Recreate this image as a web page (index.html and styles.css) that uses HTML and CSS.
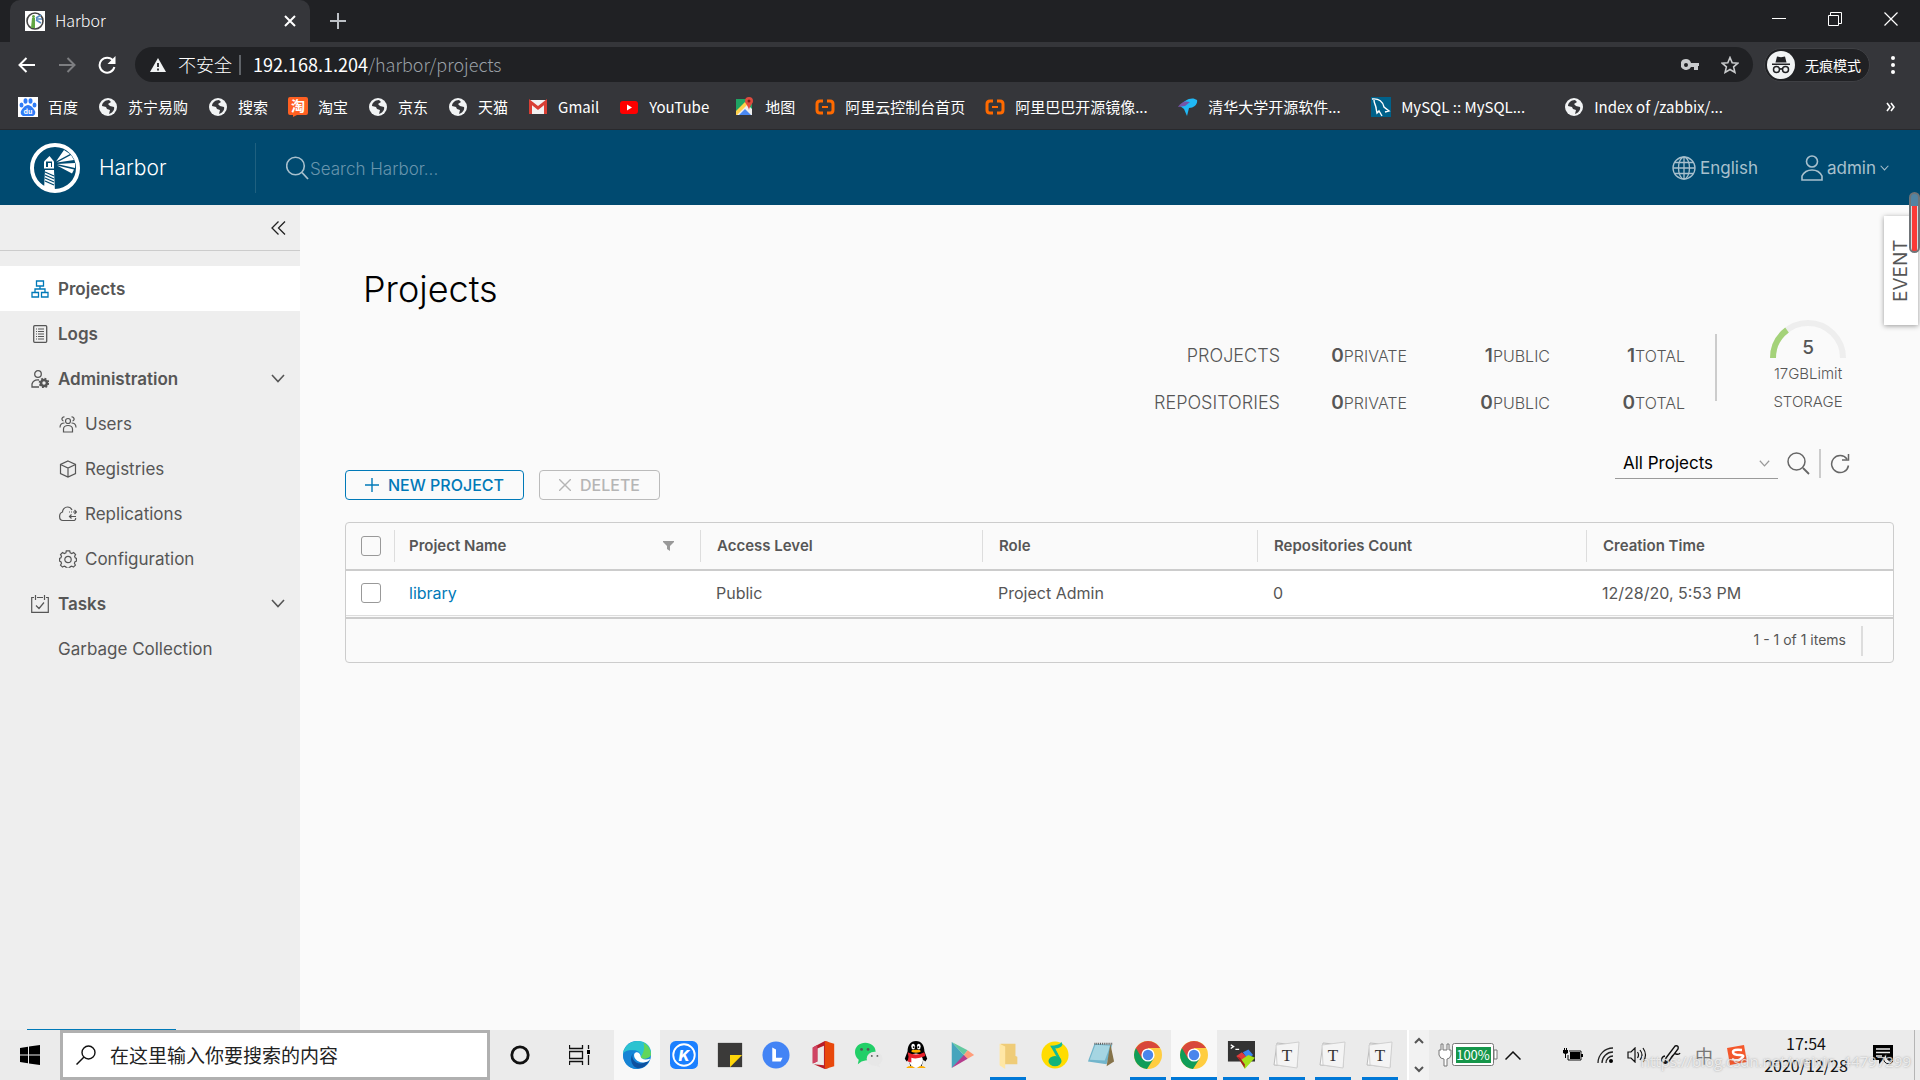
FILE: index.html
```html
<!DOCTYPE html>
<html lang="zh-CN">
<head>
<meta charset="utf-8">
<title>Harbor</title>
<link rel="stylesheet" href="styles.css">
</head>
<body>
<svg class="defs" aria-hidden="true">
  <symbol id="globe" viewBox="0 0 20 20"><circle cx="10" cy="10" r="9" fill="#f1f3f4"/><path d="M11 3 C7 3 4 6 4 9 L8 10 L9 12 L12 13 L11 17 C14 16 17 13 16 10 L12 9 L10 7 L13 5Z" fill="#35363a"/></symbol>
  <symbol id="ali" viewBox="0 0 20 20"><path d="M8 4 H5 Q2 4 2 7 V13 Q2 16 5 16 H8 M12 4 H15 Q18 4 18 7 V13 Q18 16 15 16 H12" fill="none" stroke="#ff6a00" stroke-width="3"/><path d="M7 9h6v2H7z" fill="#ff6a00"/></symbol>
  <symbol id="chrome" viewBox="0 0 28 28"><circle cx="14" cy="14" r="14" fill="#ffcd40"/><path d="M14 14 L1.900 7 A14 14 0 0 0 13 28 L20 17Z" fill="#109d58"/><path d="M14 14 L8 17.500 L1.900 7 A14 14 0 0 1 26.100 7 L14 7Z" fill="#d8483b"/><circle cx="14" cy="14" r="6.600" fill="#fff"/><circle cx="14" cy="14" r="5.200" fill="#4a86ec"/></symbol>
  <symbol id="typora" viewBox="0 0 28 28"><path d="M4 2 L25 4 L24 26 L1 24Z" fill="#fafafa" stroke="#bbb"/><path d="M3 4 L26 1 L24 27 L4 24Z" fill="#f4f4f4" stroke="#d0d0d0"/><text x="14" y="20" text-anchor="middle" font-family="Liberation Serif, serif" font-size="17" fill="#333">T</text></symbol>
  <symbol id="chev" viewBox="0 0 14 9"><path d="M1 1 L7 7.500 L13 1" fill="none" stroke="currentColor" stroke-width="1.600"/></symbol>
</svg>

<header class="browser">
  <div class="tabstrip">
    <div class="tab">
      <svg class="i20" viewBox="0 0 20 20"><path d="M0 0h20v20H0z" fill="#fff"/><circle cx="10" cy="10" r="8" fill="none" stroke="#444" stroke-width="1.600"/><path d="M7 7h3v10H6z" fill="#62a744"/><circle cx="8.500" cy="5.500" r="1.500" fill="#62a744"/><path d="M11 7l5-3M11 8h6M11 9l5 3" stroke="#5a8fc4" stroke-width="1.500"/></svg>
      <span>Harbor</span>
      <button class="bare" aria-label="Close tab"><svg width="12" height="12" viewBox="0 0 12 12"><path d="M1 1l10 10M11 1L1 11" stroke="#fff" stroke-width="2"/></svg></button>
    </div>
    <button class="bare newtab" aria-label="New tab"><svg width="16" height="16" viewBox="0 0 16 16"><path d="M8 0v16M0 8h16" stroke="#bdc1c6" stroke-width="2"/></svg></button>
    <div class="winctl">
      <button class="bare" aria-label="Minimize"><svg width="14" height="14" viewBox="0 0 14 14"><path d="M0 6.500h14" stroke="#fff"/></svg></button>
      <button class="bare" aria-label="Restore"><svg width="14" height="14" viewBox="0 0 14 14"><path d="M.5 3.500h10v10H.5zM2.500 3V.5h11v11H11" fill="none" stroke="#fff"/></svg></button>
      <button class="bare" aria-label="Close"><svg width="14" height="14" viewBox="0 0 14 14"><path d="M.5.500l13 13M13.500.500l-13 13" stroke="#fff" stroke-width="1.200"/></svg></button>
    </div>
  </div>
  <div class="toolbar">
    <div class="nav">
      <button class="bare" aria-label="Back"><svg width="18" height="16" viewBox="0 0 18 16"><path d="M17 8H2M8.500 1L1.500 8l7 7" fill="none" stroke="#fff" stroke-width="2"/></svg></button>
      <button class="bare" aria-label="Forward"><svg width="18" height="16" viewBox="0 0 18 16"><path d="M1 8h15M9.500 1l7 7-7 7" fill="none" stroke="#7d7e81" stroke-width="2"/></svg></button>
      <button class="bare" aria-label="Reload"><svg width="18" height="18" viewBox="0 0 18 18"><path d="M15 4.500A7.500 7.500 0 1 0 16.400 11" fill="none" stroke="#fff" stroke-width="2"/><path d="M17.500 0v8h-8z" fill="#fff"/></svg></button>
    </div>
    <div class="omnibox">
      <svg width="16" height="14" viewBox="0 0 16 14"><path d="M8 0l8 14H0z" fill="#f1f3f4"/><path d="M8 5v4M8 10.500v2" stroke="#202124" stroke-width="1.800"/></svg>
      <span class="insecure">不安全</span><i class="bar"></i>
      <span class="url"><b>192.168.1.204</b>/harbor/projects</span>
      <svg width="18" height="12" viewBox="0 0 18 12"><path d="M5 0a5.500 5.500 0 1 0 5 8h3v3h4V7h1V4h-8A5.500 5.500 0 0 0 5 0zm0 4a2 2 0 1 1 0 4 2 2 0 0 1 0-4z" fill="#c8cacc"/></svg>
      <svg width="18" height="18" viewBox="0 0 18 18"><path d="M9 1.500l2.200 5.200 5.600.500-4.200 3.700 1.300 5.500L9 13.500l-4.900 2.900 1.300-5.500L1.200 7.200l5.600-.500z" fill="none" stroke="#c8cacc" stroke-width="1.600"/></svg>
    </div>
    <div class="incog">
      <svg width="28" height="28" viewBox="0 0 28 28"><circle cx="14" cy="14" r="14" fill="#f1f3f4"/><path d="M10 5.500l4 .800 4-.800 1.500 6h-11zM5 12.500h18v1.500H5z" fill="#202124"/><g fill="none" stroke="#202124" stroke-width="1.500"><circle cx="9.500" cy="18.500" r="3"/><circle cx="18.500" cy="18.500" r="3"/><path d="M12.500 18.500q1.500-1.500 3 0"/></g></svg>
      <span>无痕模式</span>
    </div>
    <button class="bare" aria-label="Menu"><svg width="4" height="18" viewBox="0 0 4 18"><g fill="#fff"><circle cx="2" cy="2" r="2"/><circle cx="2" cy="9" r="2"/><circle cx="2" cy="16" r="2"/></g></svg></button>
  </div>
  <nav class="bookmarks">
    <a href="#"><svg class="i20" viewBox="0 0 20 20"><path d="M0 0h20v20H0z" fill="#fff"/><g fill="#2f7cf6"><ellipse cx="3.500" cy="8" rx="2" ry="2.600"/><ellipse cx="7.500" cy="4" rx="2" ry="2.800"/><ellipse cx="12.500" cy="4" rx="2" ry="2.800"/><ellipse cx="16.500" cy="8" rx="2" ry="2.600"/><path d="M10 8c3 0 6 4 7 6 1 3-1 5-3 5H6c-2 0-4-2-3-5 1-2 4-6 7-6z"/></g><text x="10" y="17" font-size="7" font-weight="700" text-anchor="middle" fill="#fff">du</text></svg><span>百度</span></a>
    <a href="#"><svg class="i20"><use href="#globe"/></svg><span>苏宁易购</span></a>
    <a href="#"><svg class="i20"><use href="#globe"/></svg><span>搜索</span></a>
    <a href="#"><svg class="i20" viewBox="0 0 20 20"><path d="M2 0h16q2 0 2 2v14q0 2-2 2H9l-4 2v-2H2q-2 0-2-2V2q0-2 2-2z" fill="#ff6022"/><text x="10" y="14" font-size="14" font-weight="700" text-anchor="middle" fill="#fff">淘</text></svg><span>淘宝</span></a>
    <a href="#"><svg class="i20"><use href="#globe"/></svg><span>京东</span></a>
    <a href="#"><svg class="i20"><use href="#globe"/></svg><span>天猫</span></a>
    <a href="#"><svg class="i20" viewBox="0 0 20 20"><path d="M1 3h18v14H1z" fill="#f2f2f2"/><path d="M2.500 17V5l7.500 6 7.500-6v12" fill="none" stroke="#d93f35" stroke-width="3"/></svg><span>Gmail</span></a>
    <a href="#"><svg class="i20" viewBox="0 0 20 20"><rect x="1" y="4" width="18" height="13" rx="3" fill="#f00"/><path d="M8 7.500l5 3-5 3z" fill="#fff"/></svg><span class="mid">YouTube</span></a>
    <a href="#"><svg class="i20" viewBox="0 0 20 20"><path d="M1 2h16v16H1z" fill="#1fa463"/><path d="M1 18L12 7l5 5v6z" fill="#eee"/><path d="M1 14l9-9 3 2L2 18H1z" fill="#ffd04b"/><path d="M4 18l6-6 6 6z" fill="#4a89f3"/><path d="M14 0a4 4 0 0 1 4 4c0 3-3 4-4 9-1-5-4-6-4-9a4 4 0 0 1 4-4z" fill="#dd4b3e"/><circle cx="14" cy="4" r="1.500" fill="#7c1f18"/></svg><span>地图</span></a>
    <a href="#"><svg class="i20"><use href="#ali"/></svg><span>阿里云控制台首页</span></a>
    <a href="#"><svg class="i20"><use href="#ali"/></svg><span class="cut">阿里巴巴开源镜像...</span></a>
    <a href="#"><svg class="i20" viewBox="0 0 20 20"><path d="M2 9C6 3 14-1 19 3c1 4-3 8-8 8l-2 8-3-7z" fill="#20b8f5"/><path d="M0 10C4 4 8 4 12 5L7 9z" fill="#7554a8"/></svg><span class="cut">清华大学开源软件...</span></a>
    <a href="#"><svg class="i20" viewBox="0 0 20 20"><path d="M0 0h20v20H0z" fill="#00618a"/><path d="M1 2c7-1 11 3 12 8l5 4-4 1M3 3c0 4 2 5 2 8l1 5 2-2 3 5" fill="none" stroke="#fff" stroke-width="1.400"/></svg><span class="cut">MySQL :: MySQL...</span></a>
    <a href="#"><svg class="i20"><use href="#globe"/></svg><span class="cut">Index of /zabbix/...</span></a>
    <button class="bare more" aria-label="More bookmarks"><svg width="9" height="10" viewBox="0 0 9 10"><path d="M1 1l3 4-3 4M5 1l3 4-3 4" fill="none" stroke="#fff" stroke-width="1.600"/></svg></button>
  </nav>
</header>

<header class="apphead">
  <a class="brand" href="#">
    <svg width="50" height="50" viewBox="0 0 50 50"><circle cx="25" cy="25" r="23" fill="none" stroke="#fff" stroke-width="4"/><path d="M14 18.500L19.500 13l4.500 5.500v7H14z" fill="#fff"/><path d="M16 18.500h6v5.500h-6z" fill="#004a70"/><path d="M18 20h3v4h-3z" fill="#fff"/><path d="M15 27h9l1 22-11-2z" fill="#fff"/><path d="M15 29l9 4M15 32l9 4M15 35l9 4M15 38l9 4" stroke="#004a70" stroke-width="1.300"/><path d="M26 18.500L34 7l6 4zM27 19.500L41 12l3 5zM27 21l18-1v5zM27 22.500l17 4-2 4z" fill="#fff"/></svg>
    <span>Harbor</span>
  </a>
  <label class="search">
    <svg width="23" height="24" viewBox="0 0 23 24"><circle cx="9.500" cy="10" r="8.800" fill="none" stroke="#a8c0cd" stroke-width="1.600"/><path d="M16 16.500l6 6.500" stroke="#a8c0cd" stroke-width="1.800"/></svg>
    <input type="text" aria-label="Search" placeholder="Search Harbor...">
  </label>
  <button class="bare headbtn lang">
    <svg width="24" height="24" viewBox="0 0 24 24"><g fill="none" stroke="#a8c0cd" stroke-width="1.300"><circle cx="12" cy="12" r="11"/><ellipse cx="12" cy="12" rx="5.500" ry="11"/><path d="M12 1v22M1 12h22M3 6.500h18M3 17.500h18"/></g></svg>
    <span>English</span>
  </button>
  <button class="bare headbtn">
    <svg width="22" height="26" viewBox="0 0 22 26"><g fill="none" stroke="#a8c0cd" stroke-width="1.600"><circle cx="11" cy="6.500" r="5.500"/><path d="M1 25v-4c2-4 6-6 10-6s8 2 10 6v4z"/></g></svg>
    <span>admin</span>
    <svg width="9" height="6"><use href="#chev"/></svg>
  </button>
</header>

<div class="body">
  <nav class="side">
    <div class="collapse"><button class="bare" aria-label="Collapse"><svg width="15" height="14" viewBox="0 0 15 14"><path d="M7.500.500L1 7l6.500 6.500M14 .500L7.500 7l6.500 6.500" fill="none" stroke="#222" stroke-width="1.300"/></svg></button></div>
    <a href="#" class="item on"><svg class="i18" viewBox="0 0 18 18"><g fill="none" stroke="#0079b8" stroke-width="1.300"><path d="M5.500 1h7v5h-7zM1 12.500h6.500V17H1zM10.500 12.500H17V17h-6.500zM9 6v3M4 12V9h10v3"/></g></svg>Projects</a>
    <a href="#" class="item"><svg class="i18" viewBox="0 0 18 18"><rect x="2.700" y=".7" width="13" height="16.600" rx="1" fill="none" stroke="#565656" stroke-width="1.300"/><path d="M5 4h1M7 4h6M5 6.500h1M7 6.500h6M5 9h1M7 9h6M5 11.500h1M7 11.500h6M5 14h1M7 14h6" stroke="#565656" stroke-width="1.200"/></svg>Logs</a>
    <a href="#" class="item"><svg class="i18" viewBox="0 0 18 18"><g fill="none" stroke="#565656" stroke-width="1.300"><circle cx="7" cy="4" r="3.300"/><path d="M8 17H1v-3c1-3 4-4.500 7-4"/></g><circle cx="13" cy="13" r="3" fill="none" stroke="#565656" stroke-width="2.600"/><circle cx="13" cy="13" r="4.500" fill="none" stroke="#565656" stroke-width="1.600" stroke-dasharray="1.800 1.734"/></svg>Administration<svg class="arrow"><use href="#chev"/></svg></a>
    <a href="#" class="item sub"><svg class="i18" viewBox="0 0 18 18"><g fill="none" stroke="#565656" stroke-width="1.200"><circle cx="9" cy="6" r="2.500"/><path d="M4.500 17v-3c0-2 2-3.500 4.500-3.500s4.500 1.500 4.500 3.500v3zM5.500 2a2 2 0 1 0-1 4M12.500 2a2 2 0 1 1 1 4M1 12.500C1 9 3 8 5.500 8M17 12.500c0-3.500-2-4.500-4.500-4.500"/></g></svg>Users</a>
    <a href="#" class="item sub"><svg class="i18" viewBox="0 0 18 18"><path d="M9 1l7.500 3.500v9L9 17l-7.500-3.500v-9zM1.500 4.500L9 8l7.500-3.500M9 8v9" fill="none" stroke="#565656" stroke-width="1.200"/></svg>Registries</a>
    <a href="#" class="item sub"><svg class="i18" viewBox="0 0 18 18"><path d="M13 5C12 3 10.500 2 8.500 2 5.500 2 3.500 4.500 3.500 7 1.700 7.500.600 9 .600 11.500S2 15.500 4 15.500h10c2 0 3-1 2.500-2.500M10 11.500h7M12.500 9.500l-2 2 2 2M10 7h1M12 7h1M14 7h3M15.500 5l2 2-2 2" fill="none" stroke="#565656" stroke-width="1.200"/></svg>Replications</a>
    <a href="#" class="item sub"><svg class="i18" viewBox="0 0 18 18"><g fill="none" stroke="#565656" stroke-width="1.200"><path d="M7.300.8h3.400l.5 2 1.600.7 1.800-1 2 2-1 1.800.6 1.500 1.200.6v2.800l-1.400.6-.6 1.500 1 1.800-2 2-1.800-1-1.500.6-.5 1.500H7.400l-.6-1.500-1.500-.6-1.800 1-2-2 1-1.800-.6-1.500-1.300-.6V8.400l1.300-.6.600-1.500-1-1.800 2-2 1.800 1 1.600-.7z"/><circle cx="9" cy="9.500" r="3.200"/></g></svg>Configuration</a>
    <a href="#" class="item"><svg class="i18" viewBox="0 0 18 18"><path d="M3 2.500H.7v14.800h16.600V2.500H15M6 2.500h6M4.500 0v5M13.500 0v5M5 10.500L8 13.500l5-6" fill="none" stroke="#565656" stroke-width="1.200"/></svg>Tasks<svg class="arrow"><use href="#chev"/></svg></a>
    <a href="#" class="item plain">Garbage Collection</a>
    <i class="sideline"></i>
  </nav>

  <main>
    <h1>Projects</h1>
    <section class="summary">
      <div class="stats">
        <span class="lbl">PROJECTS</span><span><b>0</b>PRIVATE</span><span><b>1</b>PUBLIC</span><span><b>1</b>TOTAL</span>
        <span class="lbl">REPOSITORIES</span><span><b>0</b>PRIVATE</span><span><b>0</b>PUBLIC</span><span><b>0</b>TOTAL</span>
      </div>
      <div class="storage">
        <div class="gauge">
          <svg width="76" height="38" viewBox="0 0 76 38"><path d="M3 38A35 35 0 0 1 73 38" fill="none" stroke="#eee" stroke-width="6"/><path d="M3 38A35 35 0 0 1 17 10" fill="none" stroke="#a4d279" stroke-width="6"/></svg>
          <b>5</b>
        </div>
        <span>17GBLimit</span>
        <span>STORAGE</span>
      </div>
    </section>
    <div class="actions">
      <div class="btns">
        <button class="btn"><svg width="14" height="14" viewBox="0 0 14 14"><path d="M7 0v14M0 7h14" stroke="currentColor" stroke-width="1.400"/></svg>NEW PROJECT</button>
        <button class="btn" disabled><svg width="12" height="12" viewBox="0 0 12 12"><path d="M0 0l12 12M12 0L0 12" stroke="currentColor" stroke-width="1.400"/></svg>DELETE</button>
      </div>
      <div class="filter">
        <div class="sel"><select aria-label="Project filter"><option>All Projects</option></select><svg width="11" height="7"><use href="#chev"/></svg></div>
        <button class="bare" aria-label="Search"><svg width="23" height="23" viewBox="0 0 23 23"><circle cx="9.500" cy="9.500" r="8.500" fill="none" stroke="#666" stroke-width="1.500"/><path d="M16 16l6 6" stroke="#666" stroke-width="1.800"/></svg></button>
        <i class="vr"></i>
        <button class="bare" aria-label="Refresh"><svg width="20" height="20" viewBox="0 0 20 20"><path d="M17 5A8.500 8.500 0 1 0 18.500 11.500M18.500 0v6H12" fill="none" stroke="#666" stroke-width="1.500"/></svg></button>
      </div>
    </div>
    <div class="grid">
      <table>
        <colgroup><col class="c0"><col class="c1"><col class="c2"><col class="c3"><col class="c4"><col></colgroup>
        <thead><tr>
          <th><input type="checkbox" aria-label="Select all"></th>
          <th><div class="cell">Project Name<svg width="11" height="10" viewBox="0 0 11 10"><path d="M0 0h11v1L7 5v5L4 8V5L0 1z" fill="#999"/></svg></div></th>
          <th><div class="cell">Access Level</div></th>
          <th><div class="cell">Role</div></th>
          <th><div class="cell">Repositories Count</div></th>
          <th><div class="cell">Creation Time</div></th>
        </tr></thead>
        <tbody><tr>
          <td><input type="checkbox" aria-label="Select library"></td>
          <td><a href="#">library</a></td><td>Public</td><td>Project Admin</td><td>0</td><td>12/28/20, 5:53 PM</td>
        </tr></tbody>
      </table>
      <div class="foot"><span>1 - 1 of 1 items</span></div>
    </div>
  </main>
  <button class="event">EVENT</button>
  <i class="thumb"></i>
</div>

<footer class="taskbar">
  <button class="bare start" aria-label="Start"><svg width="20" height="20" viewBox="0 0 20 20"><path d="M0 3l8-1.200V9.500H0zM9 1.600L20 0v9.500H9zM0 10.500h8v7.700L0 17zM9 10.500h11V20L9 18.400z"/></svg></button>
  <label class="tsearch"><svg width="20" height="20" viewBox="0 0 20 20"><circle cx="12.500" cy="7.500" r="6.500" fill="none" stroke="#111" stroke-width="1.400"/><path d="M8 12l-7.500 7.500" stroke="#111" stroke-width="1.500"/></svg><input type="text" aria-label="Search Windows" placeholder="在这里输入你要搜索的内容"></label>
  <div class="sys">
    <svg width="20" height="20" viewBox="0 0 20 20"><circle cx="10" cy="10" r="8.200" fill="none" stroke="#111" stroke-width="2.800"/></svg>
    <svg width="21" height="20" viewBox="0 0 21 20"><path d="M.5 0v3.500h13V0M.5 20v-3.500h13V20M.5 6.500h13v7H.5zM19.500 0v4M19.500 10v10" fill="none" stroke="#111" stroke-width="1.300"/><path d="M18 5h3v4h-3z"/></svg>
  </div>
  <div class="apps">
    <span class="act"><svg viewBox="0 0 30 30"><circle cx="15" cy="15" r="15" fill="#1687d9"/><path d="M0 13C2 4 9 0 16 0c9 0 15 7 14 14-1 5-8 6-11 4 1-5-3-8-7-8C7 10 3 11 0 15z" fill="#2cc3d0"/><path d="M22 2c6 3 8 9 8 13-2 4-8 5-11 3 2-5 5-8 3-16z" fill="#62d65a"/><path d="M9 12c-3 5 0 15 8 18C6 31 0 23 0 14c2-4 8-5 12-3z" fill="#1684d5"/><path d="M11 13c-3 4 1 11 8 11 4 0 7-2 9-3-3 7-9 9-13 8-7-3-8-12-4-16z" fill="#0d519f"/><path d="M12 14c2-4 7-1 7 3 0 2 4 4 10 2-1 3-5 4-8 4-6 0-10-5-9-9z" fill="#fff"/></svg></span>
    <span><svg viewBox="0 0 30 30"><rect width="30" height="30" rx="6" fill="#1b80ff"/><circle cx="15" cy="15" r="11.500" fill="none" stroke="#fff" stroke-width="2"/><text x="15" y="21" text-anchor="middle" font-family="Inter, sans-serif" font-size="16" font-weight="800" font-style="italic" fill="#fff">K</text></svg></span>
    <span><svg viewBox="0 0 30 30"><path d="M2 2h26v26H2z" fill="#3b3a39"/><path d="M15 15h13L15 28z" fill="#ffd60a"/></svg></span>
    <span><svg viewBox="0 0 30 30"><circle cx="15" cy="15" r="14.500" fill="#4384f5"/><path d="M11 7l4 2v9h7l-2 4h-9z" fill="#fff"/></svg></span>
    <span><svg viewBox="0 0 30 30"><path d="M4 7L17 0l4 1v28l-4 1-12-5 11 1V5L9 8v14l-5 2z" fill="#b91d2a"/><path d="M17 0l10 3v24l-10 3V5z" fill="#e8480c"/><path d="M4 7l5-3v18l-5 2z" fill="#cf4564"/></svg></span>
    <span><svg viewBox="0 0 30 30"><path d="M11 2c6 0 11 4 11 9s-5 10-11 10l-4 1-4 3 1-5C1 18 0 14 0 12 0 6 5 2 11 2z" fill="#22cf68"/><ellipse cx="21" cy="19" rx="8.500" ry="7.500" fill="#e7e7e7"/><path d="M25 24l2 4-6-2z" fill="#e7e7e7"/><g fill="#555"><circle cx="7" cy="9" r="1.500"/><circle cx="14" cy="9" r="1.500"/><circle cx="18" cy="16" r="1"/><circle cx="24" cy="16" r="1"/></g></svg></span>
    <span><svg viewBox="0 0 30 30"><path d="M15 0c6 0 9 5 9 11l3 8-2 3-2-2-2 7H9l-2-7-2 2-2-3 3-8C6 5 9 0 15 0z"/><ellipse cx="15" cy="21" rx="7.500" ry="7.500" fill="#fff"/><path d="M5 28q5-3 9 1H5M16 29q4-4 9-1v1" fill="#ffae00"/><path d="M6 12q9 5 18 0l1 4q-9 4-15 2v5l-4-1 1-5z" fill="#e8202a"/><ellipse cx="12" cy="6" rx="2" ry="3" fill="#fff"/><ellipse cx="18" cy="6" rx="2" ry="3" fill="#fff"/><circle cx="12.500" cy="6.500" r="1"/><circle cx="17.500" cy="6.500" r="1"/><ellipse cx="15" cy="11" rx="5" ry="1.500" fill="#ffae00"/></svg></span>
    <span><svg viewBox="0 0 30 30"><path d="M4 1l14 15L4 29z" fill="#46a5bd"/><path d="M4 1l17 9-4 5z" fill="#63c9a0"/><path d="M21 10l7 5-7 4-4-4z" fill="#ff9d7a"/><path d="M4 29l13-14 4 4z" fill="#b53d8d"/></svg></span>
    <span class="run"><svg viewBox="0 0 30 30"><path d="M7 3h16v13l2 1v8H9z" fill="#efcc78"/><path d="M6 3l6 3v24l-6-4z" fill="#ffe7a5"/></svg></span>
    <span><svg viewBox="0 0 30 30"><circle cx="15" cy="15" r="14.500" fill="#ffdc00"/><path d="M10 5q9 0 12-4l1 3q-2 4-8 4l6 12z" fill="#12b99a"/><path d="M10 5l4 1 7 13-2 2z" fill="#12b99a"/><ellipse cx="15" cy="21.500" rx="7" ry="5.500" fill="#12b47a"/></svg></span>
    <span><svg viewBox="0 0 30 30"><path d="M8 3l19 1-6 21L1 22z" fill="#72b5cb"/><path d="M9 4l16 1-6 16L3 20z" fill="#a5d5e2"/><path d="M25 3l4 19-8 5z" fill="#85734a"/><path d="M8 3h19" stroke="#555" stroke-width="2" stroke-dasharray="1 1"/></svg></span>
    <span class="run"><svg><use href="#chrome"/></svg></span>
    <span class="run act"><svg><use href="#chrome"/></svg></span>
    <span class="run"><svg viewBox="0 0 30 30"><path d="M1 0h29v22H1z" fill="#333"/><path d="M4 4l3 2-3 2M9 9h4" fill="none" stroke="#fff" stroke-width="1.500"/><path d="M10 16l6-4 5 5-6 5z" fill="#e03c3c"/><path d="M17 12l6-3 5 6-6 4z" fill="#3c86f0"/><path d="M14 21l9-6 7 3-11 12z" fill="#a4e119"/><path d="M11 17l8 12v-4l-5-7z" fill="#a61f1f"/></svg></span>
    <span class="run"><svg><use href="#typora"/></svg></span>
    <span class="run"><svg><use href="#typora"/></svg></span>
    <span class="run"><svg><use href="#typora"/></svg></span>
  </div>
  <div class="updown"><svg width="10" height="7" viewBox="0 0 10 7"><path d="M1 6l4-4 4 4" fill="none" stroke="#555" stroke-width="2"/></svg><svg width="10" height="7" viewBox="0 0 10 7"><path d="M1 1l4 4 4-4" fill="none" stroke="#555" stroke-width="2"/></svg></div>
  <div class="tray">
    <svg width="60" height="26" viewBox="0 0 60 26"><path d="M1 8h2V2h2v6h4V2h2v6h2v5q-1 4-4 4v7H6v-7q-4 0-5-4z" fill="#fff" stroke="#777"/><rect x="14.500" y="1.500" width="41" height="22" rx="2" fill="#fff" stroke="#777"/><path d="M56 8h3v9h-3z" fill="#fff" stroke="#777"/><path d="M18 5h35v16H18z" fill="#15964a"/><text x="35" y="18" text-anchor="middle" font-size="13" fill="#fff">100%</text></svg>
    <svg width="16" height="9" viewBox="0 0 16 9"><path d="M.5 8.500L8 1l7.500 7.500" fill="none" stroke="#111" stroke-width="1.500"/></svg>
    <svg class="first" width="20" height="14" viewBox="0 0 20 14"><path d="M6 3h12v9H5V7" fill="none" stroke="#111"/><path d="M7 4h10v7H7zM18 6h2v3h-2zM0 2h5v3L3 6v4H2V6L0 5zM1 0h1v2H1zM3 0h1v2H3z"/></svg>
    <svg width="16" height="16" viewBox="0 0 16 16"><g fill="none" stroke="#222" stroke-width="1.300"><path d="M1 16A15 15 0 0 1 16 1M5 16A11 11 0 0 1 16 5M9 16A7 7 0 0 1 16 9"/></g><circle cx="14" cy="14" r="2"/></svg>
    <svg width="20" height="16" viewBox="0 0 20 16"><path d="M1 5h3l4-4v14l-4-4H1zM10.500 5q2 3 0 6M13 3q4 5 0 10M16 1q5 7 0 14" fill="none" stroke="#111" stroke-width="1.200"/></svg>
    <svg width="20" height="20" viewBox="0 0 20 20"><path d="M5 13L14 1q4-1 3 3L8 16l-4 1zM4 11q-4 1-3 5 3 5 8-1 3-7 6-6 3 1 4-1" fill="none" stroke="#111" stroke-width="1.400"/></svg>
    <span class="ime">中</span>
    <svg width="20" height="20" viewBox="0 0 20 20"><path d="M0 3L17 0l3 17-17 3z" fill="#f4582b"/><path d="M15 5q-9-1-9 2t7 3-1 5q-3 1-7-1" fill="none" stroke="#fff" stroke-width="2.500"/></svg>
    <div class="clock"><span>17:54</span><span>2020/12/28</span></div>
    <svg width="20" height="20" viewBox="0 0 20 20"><path d="M0 0h20v15H10l-4 4v-4H0z"/><path d="M3 4h14M3 7.500h14M3 11h6" stroke="#eee" stroke-width="1.300"/><path d="M14 9a5 5 0 1 0 6 7 5 5 0 0 1-6-7z" fill="#eee" stroke="#111"/></svg>
    <i class="desk"></i>
  </div>
  <span class="mark">https://blog.csdn.net/weixin_44797299</span>
</footer>
</body>
</html>
```
FILE: styles.css
```css
* { box-sizing: border-box; }
body {
  margin: 0;
  min-height: 100vh;
  display: flex;
  flex-direction: column;
  font-family: Inter, "Noto Sans CJK SC", sans-serif;
  font-size: 16px;
  color: #565656;
  background: #fafafa;
}
a { text-decoration: none; color: inherit; }
svg { display: block; flex: none; }
.defs { position: absolute; width: 0; height: 0; }
.bare { border: 0; padding: 0; background: none; font: inherit; color: inherit; }
.i20 { width: 20px; height: 20px; }
.i18 { width: 18px; height: 18px; }

/* Browser chrome */
.browser { background: #35363a; color: #fff; font-family: "Noto Sans CJK SC", sans-serif; font-weight: 300; border-bottom: 1px solid #29292c; }
.tabstrip { display: flex; align-items: center; height: 42px; padding-left: 10px; background: #202124; }
.tab { display: flex; align-items: center; gap: 10px; width: 300px; height: 42px; padding: 0 14px 0 15px; border-radius: 10px 10px 0 0; background: #35363a; }
.tab span { flex: 1; padding-bottom: 2px; }
.newtab { margin-left: 20px; }
.winctl { display: flex; gap: 42px; margin-left: auto; margin-right: 22px; padding-bottom: 5px; }
.toolbar { display: flex; align-items: center; padding: 5px 25px 0 18px; }
.nav { display: flex; align-items: center; gap: 22px; width: 117px; }
.omnibox { flex: 1; display: flex; align-items: center; height: 35px; padding: 0 14px 0 15px; border-radius: 18px; background: #202124; font-size: 18px; line-height: 24px; }
.insecure { margin-left: 12px; padding-bottom: 2px; }
.bar { width: 2px; height: 20px; margin: 0 12px 0 7px; background: #5f6368; }
.url { flex: 1; padding-bottom: 2px; color: #9aa0a6; }
.url b { font-weight: 400; color: #fff; }
.omnibox svg:last-child { margin-left: 22px; }
.incog { display: flex; align-items: center; gap: 10px; height: 34px; margin: 0 21px 0 11px; padding: 0 8px 0 2px; border: 1px solid #3f4044; border-radius: 17px; background: #202124; font-size: 14px; font-weight: 400; }
.bookmarks { display: flex; align-items: center; gap: 20px; height: 47px; padding: 3px 25px 0 18px; font-size: 15px; font-weight: 400; }
.bookmarks a { display: flex; align-items: center; gap: 10px; white-space: nowrap; }
.bookmarks span { padding-bottom: 2px; }
.mid { min-width: 66px; }
.cut { min-width: 143px; }
.more { margin-left: auto; }

/* Application header */
.apphead { display: flex; align-items: center; height: 75px; padding: 0 31px 0 30px; background: #004a70; color: #a8c0cd; }
.brand { display: flex; align-items: center; gap: 19px; width: 226px; height: 50px; border-right: 1px solid #1f607f; color: #fff; font-size: 21px; font-weight: 300; }
.search { flex: 1; display: flex; align-items: center; gap: 1px; padding-left: 30px; }
.search input { width: 300px; border: 0; padding: 2px 0 0; background: none; outline: 0; font: 300 17px/24px Inter, sans-serif; color: #fff; }
.search input::placeholder { color: #6895ad; opacity: 1; }
.headbtn { display: flex; align-items: center; gap: 4px; font-size: 17px; font-weight: 400; }
.lang { margin-right: 43px; }

/* Sidebar */
.body { position: relative; flex: 1; display: flex; }
.side { display: flex; flex-direction: column; width: 300px; background: #eee; }
.collapse { display: flex; justify-content: flex-end; align-items: center; height: 46px; margin-bottom: 15px; padding-right: 14px; border-bottom: 1px solid #ccc; }
.item { display: flex; align-items: center; gap: 9px; height: 45px; padding: 0 15px 0 31px; font-size: 17px; font-weight: 600; line-height: 20px; }
.on { background: #fff; }
.sub { gap: 8px; padding-left: 59px; font-weight: 400; }
.plain { padding-left: 58px; font-weight: 400; }
.arrow { width: 14px; height: 9px; margin-left: auto; }
.sideline { height: 1px; width: 149px; margin: auto 0 0 27px; background: #0079b8; }

/* Projects page */
main { flex: 1; padding: 64px 26px 40px 45px; }
h1 { margin: 0 0 11px 18px; font-size: 36px; font-weight: 300; line-height: 40px; color: #000; }
.summary { display: flex; justify-content: flex-end; margin-right: 48px; }
.stats { display: grid; grid-template-columns: auto 127px 143px 135px; grid-auto-rows: 47px; align-items: center; text-align: right; padding: 12px 30px 0 0; font-size: 16px; font-weight: 300; }
.stats .lbl { font-size: 18px; }
.stats b { font-size: 19px; font-weight: 600; }
.storage { display: flex; flex-direction: column; align-items: center; padding-left: 55px; font-size: 15px; font-weight: 300; line-height: 28px; background: linear-gradient(#ccc, #ccc) 0 14px / 2px 67px no-repeat; }
.storage > span:first-of-type { padding-top: 2px; }
.gauge { display: grid; justify-items: center; align-items: end; height: 38px; }
.gauge > * { grid-area: 1 / 1; }
.gauge b { font-size: 19px; font-weight: 500; line-height: 20px; }
.actions { display: flex; justify-content: space-between; align-items: flex-start; margin-top: 22px; }
.btns { display: flex; gap: 15px; padding-top: 22px; }
.btn { display: flex; align-items: center; gap: 9px; height: 30px; padding: 0 19px; border: 1px solid #0079b8; border-radius: 4px; background: none; font: 500 16px/20px Inter, sans-serif; color: #0079b8; }
.btn:disabled { border-color: #bbb; color: #b5b5b5; }
.filter { display: flex; align-items: center; gap: 9px; margin-right: 44px; }
.sel { position: relative; display: flex; align-items: center; width: 163px; height: 31px; border-bottom: 1px solid #9a9a9a; }
.sel select { appearance: none; width: 100%; border: 0; padding: 0 8px; background: none; font: 400 17px/24px Inter, sans-serif; color: #000; }
.sel svg { position: absolute; right: 8px; color: #999; }
.vr { width: 2px; height: 29px; background: #ccc; }
.grid { margin-top: 22px; border: 1px solid #ccc; border-radius: 4px; }
table { width: 100%; table-layout: fixed; border-collapse: separate; border-spacing: 0; text-align: left; }
.c0 { width: 48px; }
.c1 { width: 306px; }
.c2 { width: 282px; }
.c3 { width: 275px; }
.c4 { width: 329px; }
th, td { padding: 0 0 0 15px; }
td + td + td, th + th + th .cell { padding-left: 16px; }
th { height: 48px; border-bottom: 2px solid #ccc; font-size: 15px; font-weight: 600; }
td { height: 45px; background: #fff; border-bottom: 1px solid #ddd; }
th + th { padding: 0; }
.cell { display: flex; align-items: center; justify-content: space-between; height: 32px; padding: 0 26px 0 14px; border-left: 1px solid #ddd; line-height: 20px; }
td a { color: #0079b8; }
input[type="checkbox"] { appearance: none; display: block; width: 20px; height: 20px; margin: 0; border: 1px solid #999; border-radius: 3px; }
.foot { display: flex; justify-content: flex-end; align-items: center; height: 45px; margin-top: 1px; padding-right: 30px; border-top: 2px solid #ccc; font-size: 14px; }
.foot span { padding-right: 15px; line-height: 28px; padding-bottom: 2px; border-right: 2px solid #ddd; }
.event { position: absolute; top: 11px; right: 2px; width: 34px; height: 109px; padding: 0; border: 0; background: #fff; box-shadow: 0 -1px 5px #999; writing-mode: vertical-rl; transform: rotate(180deg); font: 400 19px/32px Inter, sans-serif; color: #565656; }
.thumb { position: absolute; top: -13px; right: 0; width: 11px; height: 61px; border: 2px solid #707478; border-radius: 6px; background: linear-gradient(#5284a3 0 12px, transparent 12px), linear-gradient(90deg, #ddd 0 1px, #fb3a36 1px 6px, #ddd 6px); }

/* Windows taskbar */
.taskbar { position: relative; display: flex; align-items: center; height: 50px; background: #ebebeb; color: #111; font-family: "Noto Sans CJK SC", sans-serif; }
.start { display: flex; justify-content: center; width: 60px; }
.tsearch { display: flex; align-items: center; gap: 14px; width: 430px; height: 50px; padding: 0 13px; border: 3px solid #b0b0b0; background: #fff; }
.tsearch input { flex: 1; border: 0; padding: 0; background: none; outline: 0; font: 400 19px/28px "Noto Sans CJK SC", sans-serif; }
.tsearch input::placeholder { color: #222; opacity: 1; }
.sys { display: flex; gap: 39px; width: 124px; padding-left: 20px; }
.apps { display: grid; grid-template-columns: repeat(17, 1fr); width: 789px; height: 50px; }
.apps span { display: flex; align-items: center; justify-content: center; }
.apps svg { width: 28px; height: 30px; }
.apps .run { background: linear-gradient(#0078d7, #0078d7) 50% 100% / 36px 3px no-repeat; }
.apps .act { background-color: #f8f8f8; }
.apps .run.act { background-size: 100% 3px; }
.updown { display: flex; flex-direction: column; align-items: center; justify-content: space-between; width: 22px; height: 50px; margin-left: 4px; padding: 7px 0; border-left: 2px solid #fff; background: #f2f2f2; }
.tray { flex: 1; display: flex; align-items: center; gap: 14px; padding: 0 5px 0 9px; }
.tray > svg:nth-child(2) { margin-left: -7px; }
.first { margin-left: 28px; }
.ime { font-size: 18px; line-height: 24px; color: #777; }
.clock { display: flex; flex-direction: column; align-items: center; width: 90px; line-height: 22px; margin: 0 8px 2px 0; }
.desk { width: 1px; height: 50px; margin-left: auto; background: #b5b5b5; }
.mark { position: absolute; right: 9px; bottom: 7px; font: 400 15px/24px "Open Sans", sans-serif; color: rgba(255, 255, 255, .7); text-shadow: 0 0 2px rgba(120, 120, 120, .7); }
```
